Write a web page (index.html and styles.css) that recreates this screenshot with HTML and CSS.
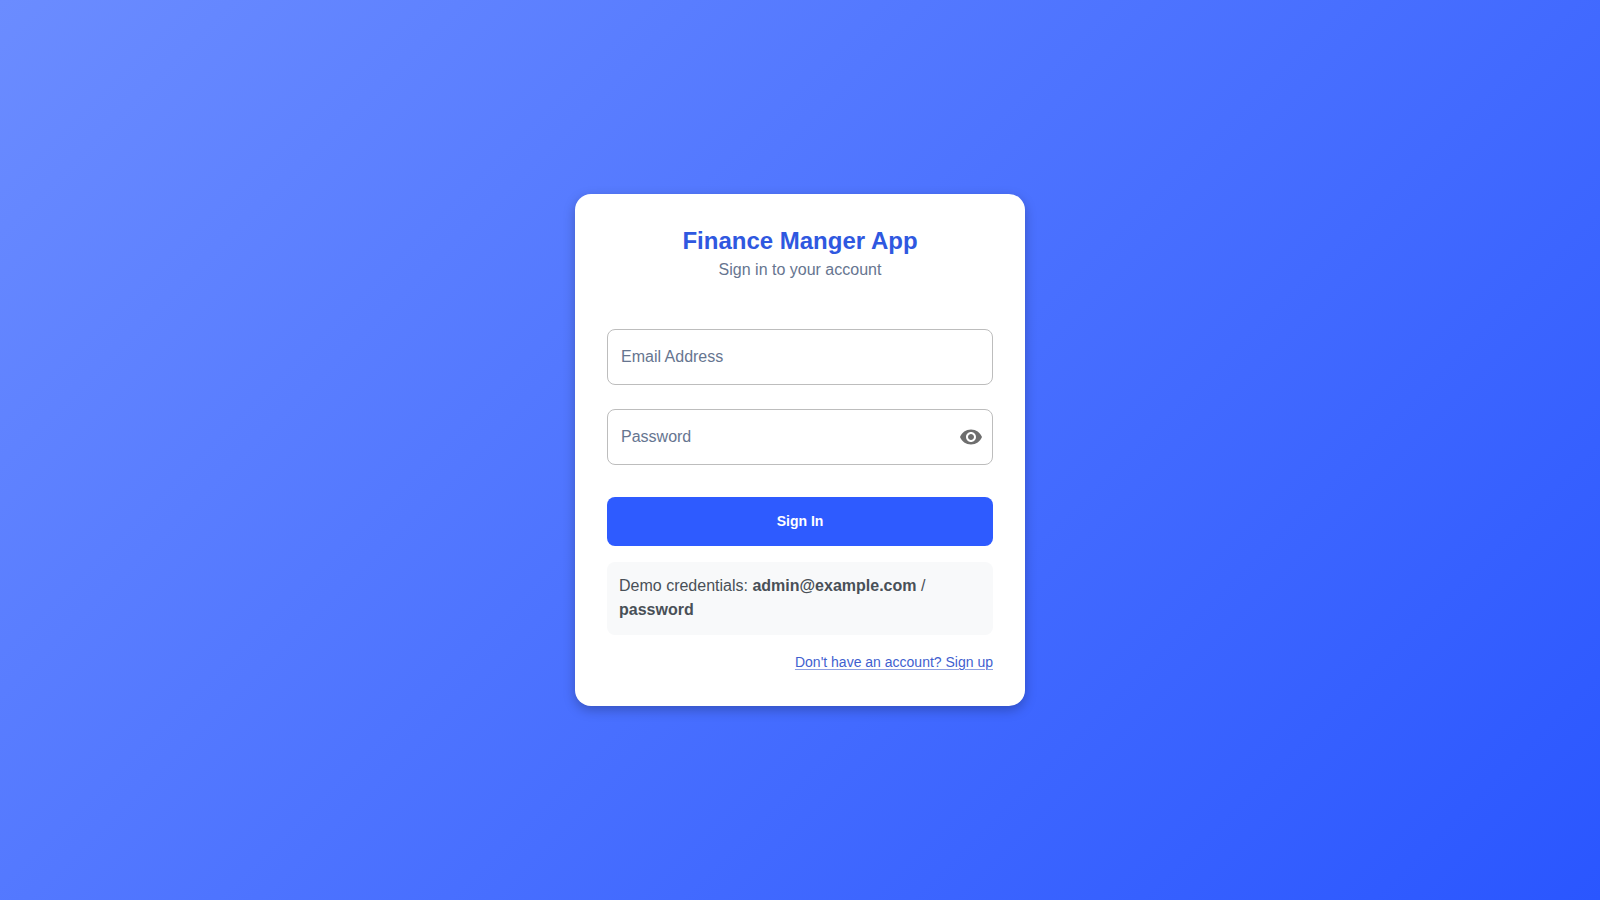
FILE: index.html
```html
<!DOCTYPE html>
<html lang="en">
<head>
<meta charset="utf-8">
<title>Finance Manger App</title>
<link rel="stylesheet" href="styles.css">
</head>
<body>
<main class="card">
  <header class="head">
    <h1 class="title">Finance Manger App</h1>
    <p class="subtitle">Sign in to your account</p>
  </header>
  <form class="form">
    <div class="field"><input class="input" type="email" placeholder="Email Address"></div>
    <div class="field">
      <input class="input" type="password" placeholder="Password">
      <span class="eye">
        <svg viewBox="0 0 24 24" width="24" height="24" fill="currentColor"><path d="M12 4.5C7 4.5 2.73 7.61 1 12c1.73 4.39 6 7.5 11 7.5s9.27-3.11 11-7.5c-1.73-4.39-6-7.5-11-7.5zM12 17c-2.76 0-5-2.24-5-5s2.24-5 5-5 5 2.24 5 5-2.24 5-5 5zm0-8c-1.66 0-3 1.34-3 3s1.34 3 3 3 3-1.34 3-3-1.34-3-3-3z"/></svg>
      </span>
    </div>
    <button class="submit" type="button">Sign In</button>
  </form>
  <div class="demo">Demo credentials: <strong>admin@example.com</strong> / <strong>password</strong></div>
  <div class="links"><a class="link" href="#">Don't have an account? Sign up</a></div>
</main>
</body>
</html>
```
FILE: styles.css
```css
* { box-sizing: border-box; }
html, body { height: 100%; }
body {
  margin: 0;
  min-height: 100vh;
  display: flex;
  align-items: center;
  justify-content: center;
  background: linear-gradient(135deg, #6b8cff 0%, #2a56ff 100%);
  font-family: "Liberation Sans", Arial, sans-serif;
}
.card {
  width: 450px;
  height: 512px;
  padding: 32px;
  background: #fff;
  border-radius: 16px;
  box-shadow: 0 4px 12px rgba(0, 0, 0, 0.25);
}
.head { text-align: center; margin-bottom: 47px; }
.title { margin: 0 0 2px; font-size: 24px; line-height: 30px; font-weight: 700; color: #2f58e0; }
.subtitle { margin: 0; font-size: 16px; line-height: 24px; color: #667590; }
.form { display: flex; flex-direction: column; }
.field { position: relative; margin-bottom: 24px; }
.input {
  display: block;
  width: 100%;
  height: 56px;
  padding: 0 13px;
  border: 1px solid #bdbdbd;
  border-radius: 8px;
  font: 16px "Liberation Sans", Arial, sans-serif;
  outline: none;
}
.input::placeholder { color: #667590; opacity: 1; }
.eye {
  position: absolute;
  right: 10px;
  top: 16px;
  width: 24px;
  height: 24px;
  color: #6e6e6e;
}
.eye svg { display: block; }
.submit {
  height: 49px;
  margin-top: 8px;
  padding: 0 0 2px;
  border: 0;
  border-radius: 8px;
  background: #2e5bff;
  color: #fff;
  font: 700 14px "Liberation Sans", Arial, sans-serif;
}
.demo {
  margin-top: 16px;
  padding: 12px 12px 13px;
  background: #f8f9fa;
  border-radius: 8px;
  font-size: 16px;
  line-height: 24px;
  color: #495057;
}
.links { margin-top: 17px; text-align: right; font-size: 14px; line-height: 20px; }
.link { color: #3f5fcf; text-decoration: underline; text-decoration-thickness: 1px; text-underline-offset: 2px; text-decoration-color: #8ea0e2; }
```
